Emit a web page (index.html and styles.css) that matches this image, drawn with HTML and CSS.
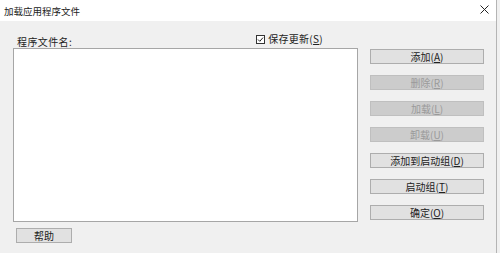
FILE: index.html
```html
<!DOCTYPE html>
<html lang="zh-CN">
<head>
    <meta charset="UTF-8">
    <title>加载应用程序文件</title>
    <link rel="stylesheet" href="styles.css">
</head>
<body>

<div class="dialog">
    <div class="title-bar">
        <span class="title">加载应用程序文件</span>
        <svg class="close" width="9" height="9" viewBox="0 0 9 9">
            <path d="M0.5 0.5 L8.5 8.5 M8.5 0.5 L0.5 8.5" stroke="#222" stroke-width="1" fill="none"/>
        </svg>
    </div>

    <div class="content">
        <div class="left-col">
            <div class="list-head">
                <span class="label">程序文件名:</span>
                <label class="check">
                    <svg class="check-box" width="9" height="9" viewBox="0 0 9 9">
                        <rect x="0.5" y="0.5" width="8" height="8" fill="#fff" stroke="#333"/>
                        <path d="M2 4.5 L3.8 6.3 L7 2.6" stroke="#222" stroke-width="1" fill="none"/>
                    </svg>
                    <span class="check-text">保存更新(<u>S</u>)</span>
                </label>
            </div>
            <div class="file-list"></div>
            <button class="btn help-btn">帮助</button>
        </div>

        <!-- Boutons d'action -->
        <div class="btn-col">
            <button class="btn">添加(<u>A</u>)</button>
            <button class="btn disabled">删除(<u>R</u>)</button>
            <button class="btn disabled">加载(<u>L</u>)</button>
            <button class="btn disabled">卸载(<u>U</u>)</button>
            <button class="btn">添加到启动组(<u>D</u>)</button>
            <button class="btn">启动组(<u>T</u>)</button>
            <button class="btn">确定(<u>O</u>)</button>
        </div>
    </div>
</div>

</body>
</html>
```

FILE: styles.css
```css
/* Fenêtre */
body {
    margin: 0;
    padding: 0;
    background: #f0f0f0;
    font-family: "Noto Sans CJK SC", "Liberation Sans", sans-serif;
    font-size: 10px;
    color: #222;
}

.dialog {
    width: 496px;
    height: 253px;
    border-right: 1px solid #b4b4b4;
    background: #f0f0f0;
}

.title-bar {
    height: 21px;
    background: #fff;
    display: flex;
    align-items: center;
    justify-content: space-between;
    padding: 0 7px 0 4px;
}

.title {
    font-size: 9.5px;
    color: #222;
}

.close {
    display: block;
    margin-top: -2px;
}

.content {
    display: flex;
    padding: 15px 0 0 13px;
    gap: 12px;
}

.left-col {
    width: 345px;
    display: flex;
    flex-direction: column;
}

.list-head {
    height: 12px;
    line-height: 12px;
    display: flex;
    justify-content: space-between;
    padding: 0 35px 0 4px;
}

.label {
    letter-spacing: 0.4px;
}

.check {
    display: flex;
    align-items: center;
    gap: 3px;
    margin-top: -6px;
}

.check-text {
    letter-spacing: 0.3px;
}

.check-box {
    display: block;
}

.file-list {
    height: 172px;
    background: #fff;
    border: 1px solid #a6a6a6;
}

/* Boutons */
.btn-col {
    width: 114px;
    display: flex;
    flex-direction: column;
    gap: 11px;
    padding-top: 13px;
}

.btn {
    height: 15px;
    padding: 0;
    margin: 0;
    font-family: inherit;
    font-size: 10px;
    line-height: 13px;
    color: #222;
    background: #e1e1e1;
    border: 1px solid #adadad;
    text-align: center;
}

.btn u {
    text-underline-offset: 1px;
}

.btn.disabled {
    background: #cccccc;
    border-color: #bfbfbf;
    color: #9a9a9a;
}

.help-btn {
    width: 56px;
    margin: 6px 0 0 3px;
}
```
